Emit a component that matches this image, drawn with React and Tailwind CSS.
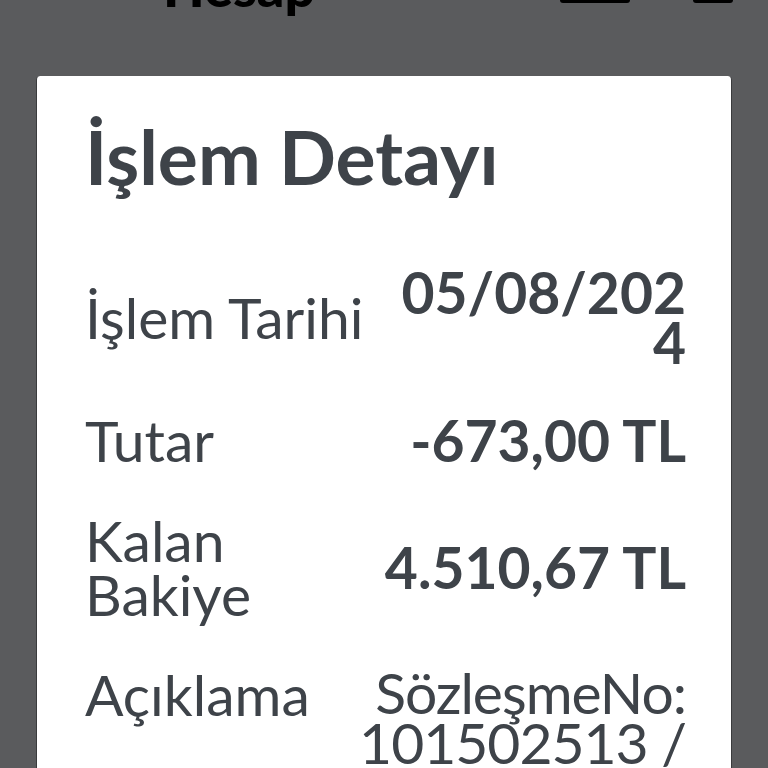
import React from 'react';

// labelFixed: label keeps its width and the value wraps; otherwise the label wraps
const rows = [
  { label: 'İşlem Tarihi', value: '05/08/2024', bold: true, labelFixed: true, top: false },
  { label: 'Tutar', value: '-673,00 TL', bold: true, labelFixed: true, top: false },
  { label: 'Kalan Bakiye', value: '4.510,67 TL', bold: true, labelFixed: false, top: false },
  { label: 'Açıklama', value: 'SözleşmeNo: 101502513 / Taksit 3', bold: false, labelFixed: true, top: true },
];

const App = () => {
  return (
    <div className="h-[768px] w-[768px] overflow-hidden bg-[#5a5b5d] font-['Lato',sans-serif]">
      {/* top bar, mostly scrolled off */}
      <div className="flex h-[76px] items-start">
        <div className="ml-[163px] mt-[-40px] text-[54px] font-black leading-none text-black">Hesap</div>
        <div className="ml-auto h-[3px] w-[70px] rounded-b-[4px] bg-black" />
        <div className="ml-[63px] mr-[35px] h-[3px] w-[40px] rounded-b-[4px] bg-black" />
      </div>

      <div className="mx-[36px] h-[800px] rounded-[4px] border-x border-[#3a3b3d] bg-white pl-[48px] pr-[45px] pt-[37px] text-[#3e4349]">
        <h1 className="text-[75px] font-bold leading-[86px]">İşlem Detayı</h1>

        <div className="mt-[68px] flex flex-col gap-[46px]">
          {rows.map((r) => (
            <div
              key={r.label}
              className={`flex justify-between gap-[32px] ${r.top ? 'items-start' : 'items-center'}`}
            >
              <div className={`text-[57px] leading-[54px] ${r.labelFixed ? 'shrink-0 whitespace-nowrap' : ''}`}>
                {r.label}
              </div>
              <div
                className={`break-words text-right text-[57px] leading-[50px] ${r.bold ? 'font-bold' : 'tracking-[-1px]'} ${r.labelFixed ? 'min-w-0' : 'shrink-0 whitespace-nowrap'}`}
              >
                {r.value}
              </div>
            </div>
          ))}
        </div>
      </div>
    </div>
  );
};

export default App;
